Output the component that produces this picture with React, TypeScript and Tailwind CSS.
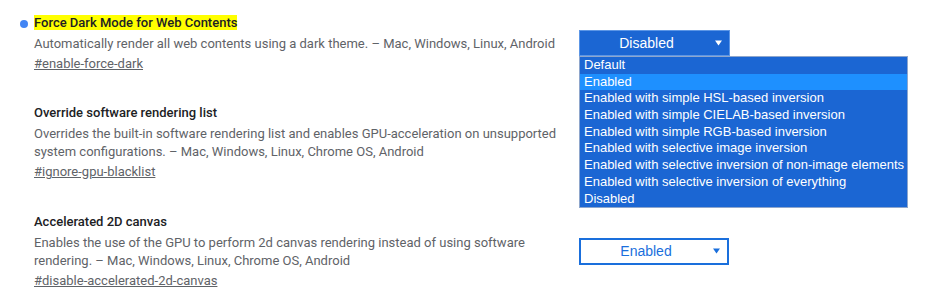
const options = [
  "Default",
  "Enabled",
  "Enabled with simple HSL-based inversion",
  "Enabled with simple CIELAB-based inversion",
  "Enabled with simple RGB-based inversion",
  "Enabled with selective image inversion",
  "Enabled with selective inversion of non-image elements",
  "Enabled with selective inversion of everything",
  "Disabled",
];

function Arrow({ color }: { color: string }) {
  return (
    <svg width="7" height="6" viewBox="0 0 7 6" className="absolute right-[7px] top-1/2 -translate-y-1/2">
      <path d="M0 0.5h7L3.5 5.5z" fill={color} />
    </svg>
  );
}

export default function App() {
  return (
    <div
      className="relative h-[297px] w-[947px] overflow-hidden bg-white pl-[34px] pt-[13px] text-[13px] text-[#5f6368]"
      style={{ fontFamily: "Roboto, 'Liberation Sans', sans-serif" }}
    >
      {/* Force dark */}
      <div className="mb-[30px] flex items-center">
        <div className="w-[530px]">
          <div className="relative h-[20px] leading-[20px]">
            <span className="absolute left-[-14px] top-[7px] h-[8px] w-[8px] rounded-full bg-[#4285f4]" />
            <span className="bg-[#ffff00] font-medium text-[#202124]">Force Dark Mode for Web Contents</span>
          </div>
          <p className="mt-[2px] leading-[18px]">
            Automatically render all web contents using a dark theme. – Mac, Windows, Linux, Android
          </p>
          <a className="mt-[2px] block leading-[18px] underline">#enable-force-dark</a>
        </div>
        <div className="relative ml-[15px]">
          <div
            className="relative h-[26px] w-[151px] border border-[#5c96e6] bg-[#1b66d3] pr-[16px] text-center text-[14px] leading-[24px] text-white"
            style={{ fontFamily: "'Liberation Sans', Arial, sans-serif" }}
          >
            Disabled
            <Arrow color="#ffffff" />
          </div>
          <ul
            className="absolute left-0 top-[26px] z-10 w-[329px] border border-[#8ea6cc] bg-[#1b66d3] text-[13px] text-white"
            style={{ fontFamily: "'Liberation Sans', Arial, sans-serif" }}
          >
            {options.map((o) => (
              <li
                key={o}
                className={`h-[16.7px] whitespace-nowrap px-[4px] leading-[16.7px] ${o === "Enabled" ? "bg-[#1e90ff]" : ""}`}
              >
                {o}
              </li>
            ))}
          </ul>
        </div>
      </div>

      {/* Override software rendering list */}
      <div className="mb-[31px] flex items-center">
        <div className="w-[530px]">
          <div className="h-[20px] font-medium leading-[20px] text-[#202124]">Override software rendering list</div>
          <p className="mt-[2px] leading-[18px]">
            Overrides the built-in software rendering list and enables GPU-acceleration on unsupported system
            configurations. – Mac, Windows, Linux, Chrome OS, Android
          </p>
          <a className="mt-[2px] block leading-[18px] underline">#ignore-gpu-blacklist</a>
        </div>
      </div>

      {/* Accelerated 2D canvas */}
      <div className="flex items-center">
        <div className="w-[530px]">
          <div className="h-[20px] font-medium leading-[20px] text-[#202124]">Accelerated 2D canvas</div>
          <p className="mt-[2px] leading-[18px]">
            Enables the use of the GPU to perform 2d canvas rendering instead of using software rendering. – Mac,
            Windows, Linux, Chrome OS, Android
          </p>
          <a className="mt-[2px] block leading-[18px] underline">#disable-accelerated-2d-canvas</a>
        </div>
        <div
          className="relative ml-[15px] h-[27px] w-[150px] border-2 border-[#1a6fdc] bg-white pr-[16px] text-center text-[14px] leading-[23px] text-[#1a6fdc]"
          style={{ fontFamily: "'Liberation Sans', Arial, sans-serif" }}
        >
          Enabled
          <Arrow color="#1a6fdc" />
        </div>
      </div>
    </div>
  );
}
